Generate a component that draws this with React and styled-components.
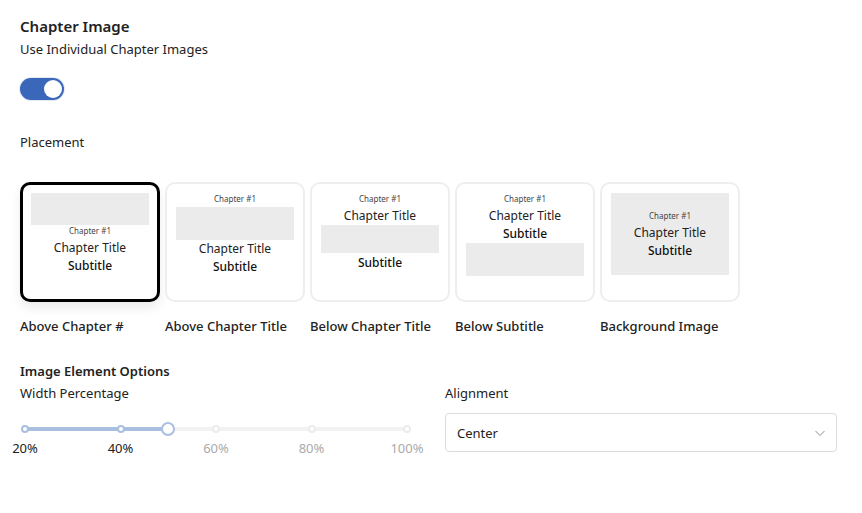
import React, { useState } from "react";
import styled, { createGlobalStyle } from "styled-components";

const Global = createGlobalStyle`
    body {
        margin: 0;
        background: #fff;
        font-family: "Noto Sans", "Open Sans", sans-serif;
        color: #222;
    }
`;

const placements = [
    { key: "above-number", label: "Above Chapter #" },
    { key: "above-title", label: "Above Chapter Title" },
    { key: "below-title", label: "Below Chapter Title" },
    { key: "below-subtitle", label: "Below Subtitle" },
    { key: "background", label: "Background Image" },
];

const marks = [20, 40, 60, 80, 100];

export default function App () {
    const [ enabled, setEnabled ] = useState(true);
    const [ placement, setPlacement ] = useState("above-number");
    const [ width ] = useState(50);

    const pct = (width - 20) / 80 * 100;

    return(
        <Page>
            <Global/>
            <Title>Chapter Image</Title>
            <Text>Use Individual Chapter Images</Text>
            <Toggle $on={enabled} onClick={() => setEnabled(!enabled)}>
                <Knob $on={enabled}/>
            </Toggle>

            <Label>Placement</Label>
            <Cards>
                {placements.map(p => (
                    <Option key={p.key} onClick={() => setPlacement(p.key)}>
                        <Card $active={placement === p.key}>
                            <Preview type={p.key}/>
                        </Card>
                        <OptionLabel>{p.label}</OptionLabel>
                    </Option>
                ))}
            </Cards>

            <Section>Image Element Options</Section>
            <Columns>
                <div>
                    <Text>Width Percentage</Text>
                    <Slider>
                        <Rail/>
                        <Track style={{ width: pct + "%" }}/>
                        {marks.map(m => {
                            const left = (m - 20) / 80 * 100;
                            return <Dot key={m} $active={left <= pct} style={{ left: left + "%" }}/>;
                        })}
                        <Handle style={{ left: pct + "%" }}/>
                        {marks.map(m => {
                            const left = (m - 20) / 80 * 100;
                            return <Mark key={m} $active={left <= pct} style={{ left: left + "%" }}>{m}%</Mark>;
                        })}
                    </Slider>
                </div>
                <div>
                    <Text>Alignment</Text>
                    <Select>
                        <span>Center</span>
                        <svg width="12" height="12" viewBox="0 0 12 12" fill="none">
                            <path d="M1.5 4l4.5 4.5L10.5 4" stroke="#bbb" strokeWidth="1.1"/>
                        </svg>
                    </Select>
                </div>
            </Columns>
        </Page>
    );
};

function Preview ({ type }) {
    const num = <Num>Chapter #1</Num>;
    const title = <ChTitle>Chapter Title</ChTitle>;
    const sub = <Sub>Subtitle</Sub>;
    if (type === "above-number") {
        return <><ImgBox $h={32}/>{num}{title}{sub}</>;
    }
    if (type === "above-title") {
        return <>{num}<ImgBox $h={33}/>{title}{sub}</>;
    }
    if (type === "below-title") {
        return <>{num}{title}<ImgBox $h={28}/><Gap $h={1}/>{sub}</>;
    }
    if (type === "below-subtitle") {
        return <>{num}{title}{sub}<ImgBox $h={33}/></>;
    }
    return (
        <BgBox>
            {num}{title}{sub}
        </BgBox>
    );
}

const Page = styled.div`
    padding: 16px 25px 40px 20px;
`;

const Title = styled.div`
    font-size: 15px;
    font-weight: 600;
    color: #222;
    line-height: 20px;
`;

const Text = styled.div`
    font-size: 13px;
    line-height: 18px;
    margin-top: 4px;
    color: #222;
`;

const Toggle = styled.div`
    width: 44px;
    height: 22px;
    border-radius: 11px;
    background: ${p => p.$on ? "#3a67b9" : "#ccc"};
    margin-top: 20px;
    position: relative;
    cursor: pointer;
    box-shadow: 0 0 0 1px rgba(58,103,185,0.15);
`;

const Knob = styled.div`
    position: absolute;
    top: 2px;
    left: ${p => p.$on ? "24px" : "2px"};
    width: 18px;
    height: 18px;
    border-radius: 50%;
    background: #fff;
`;

const Label = styled.div`
    font-size: 13px;
    line-height: 18px;
    margin-top: 33px;
`;

const Cards = styled.div`
    display: flex;
    gap: 5px;
    margin-top: 31px;
`;

const Option = styled.div`
    width: 140px;
    cursor: pointer;
`;

const Card = styled.div`
    box-sizing: border-box;
    height: 120px;
    border-radius: 10px;
    border: ${p => p.$active ? "3px solid #000" : "2px solid #eee"};
    padding: ${p => p.$active ? "8px" : "9px"};
    box-shadow: ${p => p.$active ? "0 6px 12px rgba(0,0,0,0.08)" : "none"};
    display: flex;
    flex-direction: column;
    align-items: center;
    text-align: center;
`;

const ImgBox = styled.div`
    width: 100%;
    height: ${p => p.$h}px;
    background: #ebebeb;
    flex-shrink: 0;
`;

const BgBox = styled.div`
    box-sizing: border-box;
    width: 100%;
    height: 82px;
    padding-top: 2px;
    background: #ebebeb;
    display: flex;
    flex-direction: column;
    align-items: center;
    justify-content: center;
`;

const Gap = styled.div`
    height: ${p => p.$h}px;
    flex-shrink: 0;
`;

const Num = styled.div`
    font-size: 8px;
    line-height: 12px;
    margin-bottom: 2px;
    color: #444;
`;

const ChTitle = styled.div`
    font-size: 12px;
    line-height: 18px;
    color: #222;
`;

const Sub = styled.div`
    font-size: 12px;
    line-height: 18px;
    font-weight: 500;
    color: #111;
`;

const OptionLabel = styled.div`
    font-size: 13px;
    font-weight: 500;
    line-height: 18px;
    margin-top: 15px;
    color: #222;
`;

const Section = styled.div`
    font-size: 13px;
    font-weight: 600;
    line-height: 18px;
    margin-top: 27px;
`;

const Columns = styled.div`
    display: grid;
    grid-template-columns: 1fr 392px;
    column-gap: 20px;
`;

const Slider = styled.div`
    position: relative;
    height: 40px;
    margin: 17px 18px 0 5px;
`;

const Rail = styled.div`
    position: absolute;
    left: 0;
    right: 0;
    top: 8px;
    height: 4px;
    border-radius: 2px;
    background: #f2f2f2;
`;

const Track = styled.div`
    position: absolute;
    left: 0;
    top: 8px;
    height: 4px;
    border-radius: 2px;
    background: #a9bfe0;
`;

const Dot = styled.div`
    position: absolute;
    top: 6px;
    width: 8px;
    height: 8px;
    box-sizing: border-box;
    margin-left: -4px;
    border-radius: 50%;
    background: #fff;
    border: 2px solid ${p => p.$active ? "#a9bfe0" : "#ececec"};
`;

const Handle = styled.div`
    position: absolute;
    top: 3px;
    width: 14px;
    height: 14px;
    box-sizing: border-box;
    margin-left: -7px;
    border-radius: 50%;
    background: #fff;
    border: 2px solid #a9bfe0;
`;

const Mark = styled.div`
    position: absolute;
    top: 20px;
    transform: translateX(-50%);
    font-size: 13px;
    color: ${p => p.$active ? "#222" : "#aaa"};
    white-space: nowrap;
`;

const Select = styled.div`
    margin-top: 11px;
    height: 39px;
    box-sizing: border-box;
    border: 1px solid #dcdcdc;
    border-radius: 4px;
    display: flex;
    align-items: center;
    justify-content: space-between;
    padding: 0 10px 0 11px;
    font-size: 13px;
    color: #222;
`;
